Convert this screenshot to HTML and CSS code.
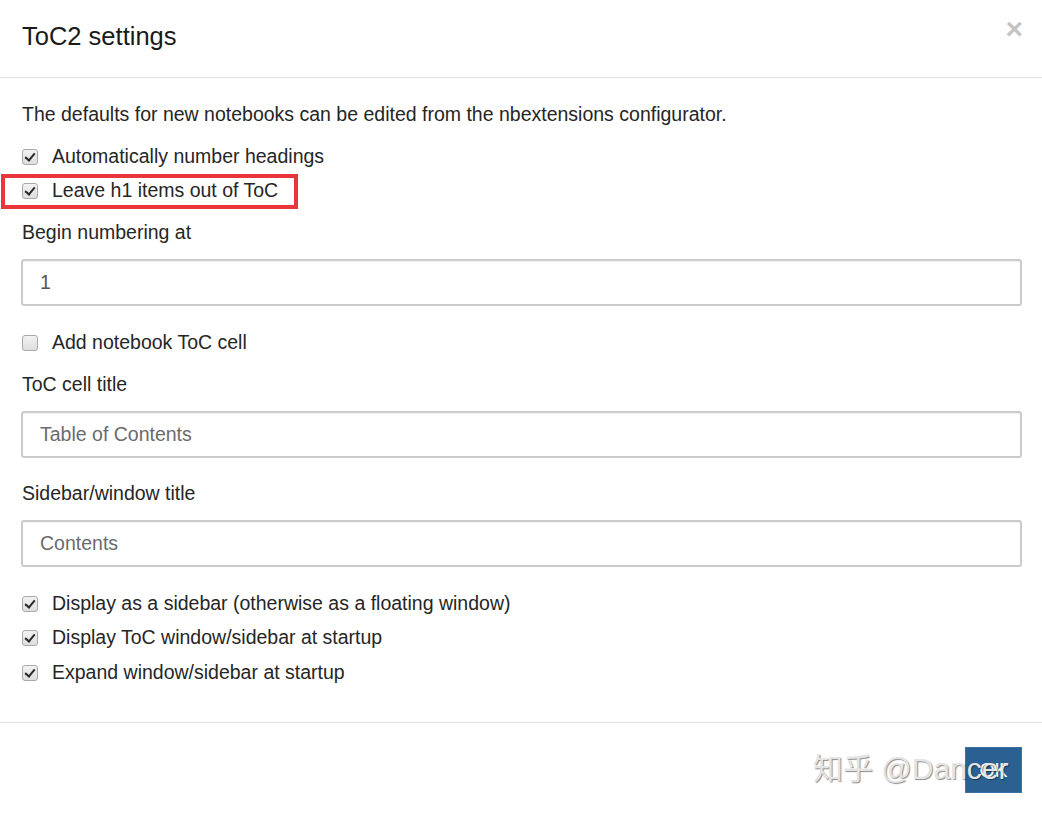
FILE: index.html
```html
<!DOCTYPE html>
<html>
<head>
<meta charset="utf-8">
<link rel="stylesheet" href="styles.css">
</head>
<body>
<div class="modal">
  <div class="modal-header">
    <h4 class="modal-title">ToC2 settings</h4>
    <span class="close">&times;</span>
  </div>
  <div class="modal-body">
    <p class="intro">The defaults for new notebooks can be edited from the nbextensions configurator.</p>
    <div class="checks group-a">
      <label class="check"><span class="box checked"></span><span>Automatically number headings</span></label>
      <label class="check marked"><span class="box checked"></span><span>Leave h1 items out of ToC</span></label>
    </div>
    <div class="field field-1">
      <label class="field-label">Begin numbering at</label>
      <div class="input value">1</div>
    </div>
    <label class="check single"><span class="box"></span><span>Add notebook ToC cell</span></label>
    <div class="field field-2">
      <label class="field-label">ToC cell title</label>
      <div class="input placeholder">Table of Contents</div>
    </div>
    <div class="field field-3">
      <label class="field-label">Sidebar/window title</label>
      <div class="input placeholder">Contents</div>
    </div>
    <div class="checks group-b">
      <label class="check"><span class="box checked"></span><span>Display as a sidebar (otherwise as a floating window)</span></label>
      <label class="check"><span class="box checked"></span><span>Display ToC window/sidebar at startup</span></label>
      <label class="check"><span class="box checked"></span><span>Expand window/sidebar at startup</span></label>
    </div>
  </div>
  <div class="modal-footer">
    <button class="btn-primary">OK</button>
    <span class="watermark">知乎 @Dancer</span>
  </div>
</div>
</body>
</html>
```
FILE: styles.css
```css
*, *::before, *::after { box-sizing: border-box; }
html, body { margin: 0; padding: 0; background: #fff; }
body {
  font-family: "Liberation Sans", Arial, "Noto Sans CJK SC", sans-serif;
  color: #262626;
  font-size: 19.5px;
  line-height: 27px;
}
.modal { width: 1042px; height: 813px; display: flex; flex-direction: column; }
.modal-header {
  height: 78px;
  border-bottom: 1px solid #e2e2e2;
  display: flex;
  justify-content: space-between;
  align-items: flex-start;
  padding: 21px 19px 0 22px;
}
.modal-title { margin: 0; font-size: 25.5px; font-weight: normal; line-height: 30px; color: #1a1a1a; }
.close {
  font-size: 30px;
  font-weight: bold;
  color: #c4c4c4;
  line-height: 20px;
  margin-top: -2px;
}
.modal-body { padding: 23px 20px 36px 21px; display: flex; flex-direction: column; }
.intro { margin: 0 0 15px 1px; }
.checks { display: flex; flex-direction: column; gap: 7px; }
.group-a { margin-bottom: 15px; }
.group-b .check:last-child { margin-top: 1px; }
.check { display: flex; align-items: center; height: 27px; position: relative; }
.check span:last-child { margin-left: 14px; }
.single { margin-bottom: 15px; }
.box {
  width: 16px; height: 16px;
  margin-left: 1px;
  border: 1px solid #a9a9a9;
  border-radius: 3px;
  background: linear-gradient(#f2f2f2, #dedede);
  position: relative;
  flex: none;
}
.box.checked::after {
  content: "";
  position: absolute;
  left: 4px; top: 1px;
  width: 6px; height: 10px;
  border: solid #2a2a2a;
  border-width: 0 2.5px 2.5px 0;
  transform: rotate(40deg);
}
.marked::before {
  content: "";
  position: absolute;
  left: -20px; top: -3px;
  width: 297px; height: 35px;
  border: 4px solid #e8363b;
}
.field { display: flex; flex-direction: column; gap: 13px; }
.field-1 { margin-bottom: 23px; }
.field-2 { margin-bottom: 22px; }
.field-3 { margin-bottom: 23px; }
.field-label { margin-left: 1px; }
.input {
  height: 47px;
  border: 2px solid #cbcbcb;
  border-radius: 3px;
  padding: 0 17px;
  display: flex;
  align-items: center;
  box-shadow: inset 0 1px 1px rgba(0,0,0,0.06);
}
.input.value { color: #555; }
.input.placeholder { color: #6b6b6b; }
.modal-footer {
  border-top: 1px solid #e2e2e2;
  padding: 24px 20px 0 0;
  display: flex;
  justify-content: flex-end;
  align-items: flex-start;
  position: relative;
  flex: 1;
}
.btn-primary {
  width: 57px; height: 46px;
  background: #2a6092;
  border: 1px solid #3c70a8;
  color: #fff;
  font-family: "Liberation Sans", Arial, sans-serif;
  font-size: 19.5px;
  padding: 0;
}
.watermark {
  position: absolute;
  left: 813px; top: 26px;
  font-family: "Liberation Sans", "Noto Sans CJK SC", sans-serif;
  font-size: 30px;
  line-height: 40px;
  color: #e4e4e4;
  text-shadow: 1px 1px 1px rgba(0,0,0,0.45);
  white-space: nowrap;
}
```
